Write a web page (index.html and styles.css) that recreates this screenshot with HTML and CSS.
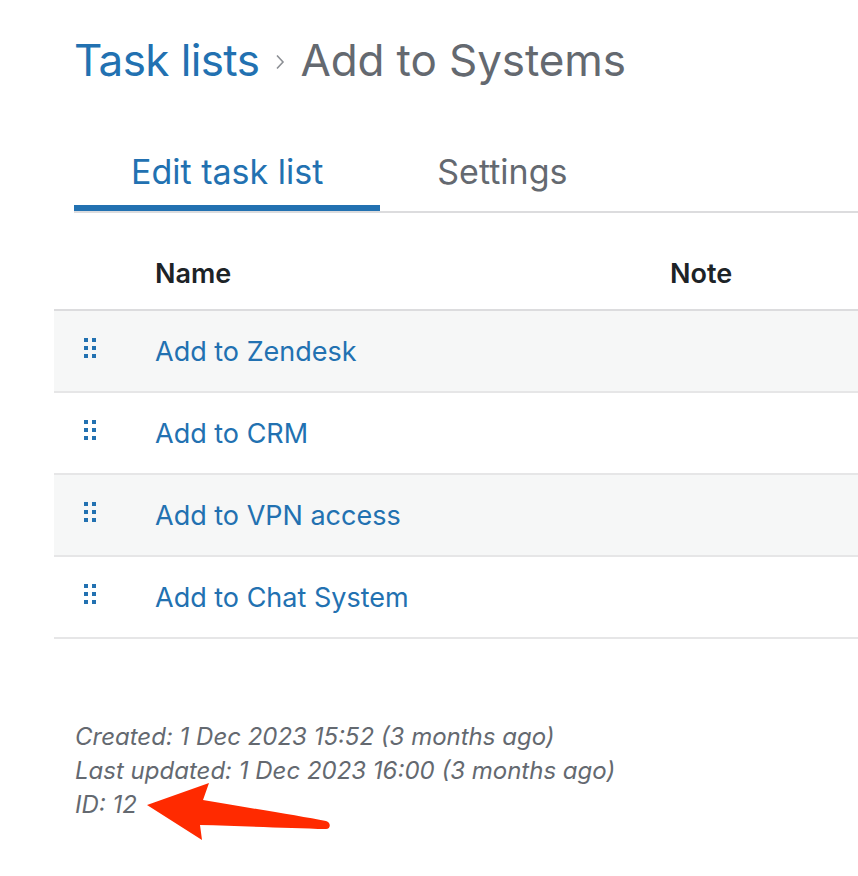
FILE: index.html
```html
<!DOCTYPE html>
<html>

<head>
    <meta charset="utf-8">
    <title>Task lists › Add to Systems</title>
    <link rel="stylesheet" href="styles.css">
</head>

<body>
    <div class="page">
        <h1 class="title">
            <a href="#" class="crumb">Task lists</a>
            <svg class="sep" width="10" height="16" viewBox="0 0 10 16"><path d="M2 1.5 L8 8 L2 14.5" fill="none" stroke="#8c8f94" stroke-width="1.6"/></svg>
            <span class="current">Add to Systems</span>
        </h1>

        <div class="tabs">
            <a href="#" class="tab cur">Edit task list</a>
            <a href="#" class="tab">Settings</a>
        </div>

        <table class="list">
            <thead>
                <tr>
                    <th class="handle"></th>
                    <th class="name">Name</th>
                    <th class="note">Note</th>
                </tr>
            </thead>
            <tbody>
                <tr>
                    <td class="handle"><svg class="dots" width="12" height="20" viewBox="0 0 12 20"><path d="M0 0h4v4H0zM8 0h4v4H8zM0 8h4v4H0zM8 8h4v4H8zM0 16h4v4H0zM8 16h4v4H8z"/></svg></td>
                    <td class="name"><a href="#">Add to Zendesk</a></td>
                    <td class="note"></td>
                </tr>
                <tr>
                    <td class="handle"><svg class="dots" width="12" height="20" viewBox="0 0 12 20"><path d="M0 0h4v4H0zM8 0h4v4H8zM0 8h4v4H0zM8 8h4v4H8zM0 16h4v4H0zM8 16h4v4H8z"/></svg></td>
                    <td class="name"><a href="#">Add to CRM</a></td>
                    <td class="note"></td>
                </tr>
                <tr>
                    <td class="handle"><svg class="dots" width="12" height="20" viewBox="0 0 12 20"><path d="M0 0h4v4H0zM8 0h4v4H8zM0 8h4v4H0zM8 8h4v4H8zM0 16h4v4H0zM8 16h4v4H8z"/></svg></td>
                    <td class="name"><a href="#">Add to VPN access</a></td>
                    <td class="note"></td>
                </tr>
                <tr>
                    <td class="handle"><svg class="dots" width="12" height="20" viewBox="0 0 12 20"><path d="M0 0h4v4H0zM8 0h4v4H8zM0 8h4v4H0zM8 8h4v4H8zM0 16h4v4H0zM8 16h4v4H8z"/></svg></td>
                    <td class="name"><a href="#">Add to Chat System</a></td>
                    <td class="note"></td>
                </tr>
            </tbody>
        </table>

        <div class="meta">
            <p>Created: 1 Dec 2023 15:52 (3 months ago)</p>
            <p>Last updated: 1 Dec 2023 16:00 (3 months ago)</p>
            <p>ID: 12</p>
        </div>
    </div>

    <!-- annotation arrow -->
    <svg class="arrow" width="200" height="70" viewBox="140 775 200 70">
        <path d="M147 805 L209 783 L203 800 C250 808 300 816 326 821 C331 822 331 829 326 829 C290 828 240 826 200 825 L202 840 Z" fill="#ff2a00"/>
    </svg>
</body>

</html>
```

FILE: styles.css
```css
* {
    padding: 0;
    margin: 0;
    box-sizing: border-box;
}

body {
    font-family: Inter, "Liberation Sans", sans-serif;
    background: #fff;
    color: #1d2327;
}

a {
    text-decoration: none;
    color: #2271b1;
}

.page {
    padding: 28px 0 0 54px;
    overflow: hidden;
}

.title {
    display: flex;
    align-items: center;
    padding-left: 20px;
    font-size: 44px;
    font-weight: 400;
    line-height: 64px;
}

.title .crumb {
    letter-spacing: -0.6px;
}

.title .sep {
    margin: 4px 15px 0 16px;
}

.title .current {
    color: #646970;
    letter-spacing: -0.1px;
}

.tabs {
    display: flex;
    margin: 57px 0 0 20px;
    border-bottom: 2px solid #dcdcde;
}

.tab {
    padding: 0 57px 10px;
    font-size: 34px;
    line-height: 46px;
    color: #646970;
    border-bottom: 6px solid transparent;
}

.tab.cur {
    color: #2271b1;
    border-bottom-color: #2271b1;
}

.list {
    width: 820px;
    margin-top: 20px;
    border-collapse: collapse;
    font-size: 27px;
}

.list th {
    height: 77px;
    padding-top: 4px;
    text-align: left;
    font-weight: 600;
    border-bottom: 2px solid #dcdcde;
}

.list td {
    height: 82px;
    border-bottom: 2px solid #e6e6e7;
}

.list tbody tr:nth-child(odd) {
    background: #f6f7f7;
}

.list .handle {
    width: 101px;
    padding-left: 30px;
}

.list .name {
    width: 515px;
}

.dots {
    display: block;
    margin-bottom: 6px;
    fill: #2271b1;
    shape-rendering: crispEdges;
}

.meta {
    margin: 81px 0 0 21px;
    padding-bottom: 40px;
    font-size: 24px;
    line-height: 34px;
    font-style: italic;
    color: #646970;
}

.arrow {
    position: absolute;
    left: 140px;
    top: 775px;
}
```
